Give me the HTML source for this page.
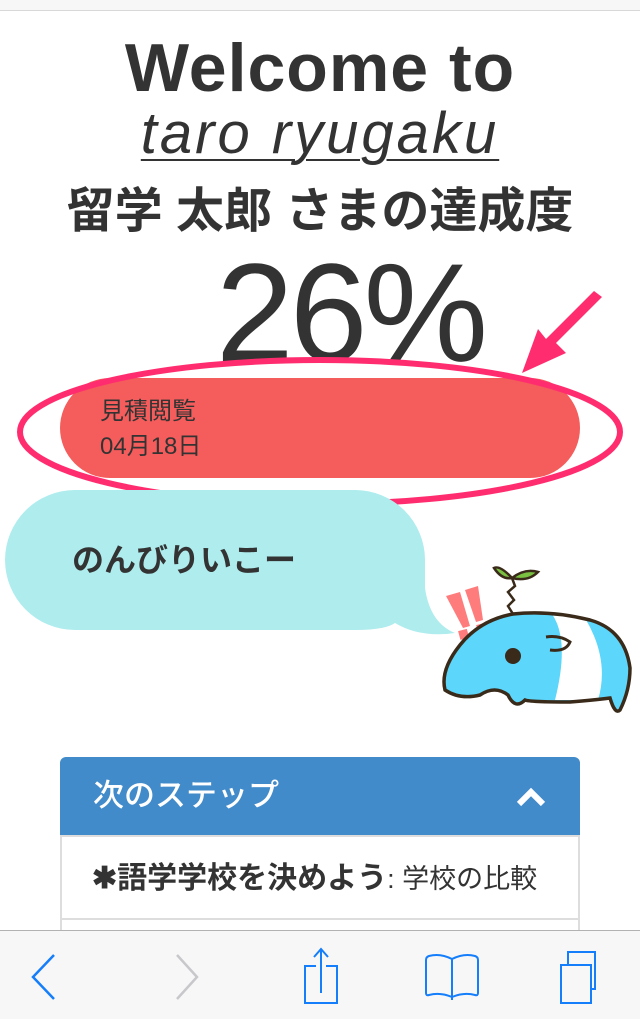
<!DOCTYPE html>
<html><head><meta charset="utf-8"><style>
*{margin:0;padding:0;box-sizing:border-box}
body{width:640px;height:1019px;overflow:hidden;background:#fff;position:relative;font-family:"Liberation Sans","Noto Sans CJK JP",sans-serif;color:#333}
.a{position:absolute}
</style></head><body>
<div class="a" style="left:0;top:0;width:640px;height:11px;background:#f7f7f7;border-bottom:1px solid #d8d8d8"></div>
<div class="a" style="left:0;top:28px;width:640px;text-align:center;font-size:68px;font-weight:bold;line-height:80px;letter-spacing:1px">Welcome to</div>
<div class="a" style="left:0;top:100px;width:640px;text-align:center;font-size:58px;font-style:italic;line-height:68px;letter-spacing:3px"><span style="text-decoration:underline;text-decoration-thickness:2px;text-underline-offset:6px">taro ryugaku</span></div>
<div class="a" style="left:0;top:182px;width:640px;text-align:center;font-size:48px;font-weight:bold;line-height:60px">留学 太郎 さまの達成度</div>
<div class="a" style="left:0;top:238px;width:700px;text-align:center;font-size:140px;font-weight:300;line-height:150px;letter-spacing:-4px;color:#333">26%</div>
<div class="a" style="left:60px;top:378px;width:520px;height:100px;border-radius:50px;background:#f45d5c"></div>
<div class="a" style="left:100px;top:394px;font-size:24px;line-height:35px;color:#333">見積閲覧<br>04月18日</div>
<svg class="a" style="left:0;top:280px" width="640" height="240">
<ellipse cx="320" cy="152" rx="300" ry="72" fill="none" stroke="#ff2d6f" stroke-width="6"/>
</svg>
<svg class="a" style="left:500px;top:285px" width="110" height="100">
<path d="M102 12 L56 58 L66 68 L22 88 L38 44 L46 54 L94 6 Z" fill="#ff2d6f"/>
</svg>
<svg class="a" style="left:0;top:488px" width="470" height="160">
<path d="M75 2 H355 A70 70 0 0 1 425 72 V100 Q430 135 455 145 Q420 150 395 135 Q385 142 355 142 H75 A70 70 0 0 1 75 2 Z" fill="#aeecee"/>
</svg>
<div class="a" style="left:72px;top:538px;font-size:32px;font-weight:bold;line-height:44px;color:#333">のんびりいこー</div>
<svg class="a" style="left:420px;top:550px" width="220" height="180" viewBox="0 0 220 180">
<g fill="#ff7c7c"><path d="M26 46 L40 42 L50 76 L43 78Z"/><path d="M45 40 L58 36 L63 70 L56 72Z"/><rect x="39" y="80" width="9" height="9" transform="rotate(-15 43 84)"/><rect x="57" y="74" width="9" height="9" transform="rotate(-15 61 78)"/></g>
<path d="M93 64 Q60 70 40 95 Q20 120 25 140 Q40 150 60 145 Q75 135 88 145 Q95 160 105 150 Q110 152 150 152 Q175 150 190 148 Q195 165 200 160 Q210 140 210 118 Q205 80 170 70 Q130 60 93 64Z" fill="#5cd6fa"/>
<path d="M132 64 Q150 90 135 150 L178 150 Q190 110 165 68Z" fill="#fff"/>
<path d="M93 64 Q60 70 40 95 Q20 120 25 140 Q40 150 60 145 Q75 135 88 145 Q95 160 105 150 Q110 152 150 152 Q175 150 190 148 Q195 165 200 160 Q210 140 210 118 Q205 80 170 70 Q130 60 93 64Z" fill="none" stroke="#3a2a1a" stroke-width="3.5"/>
<circle cx="93" cy="106" r="8" fill="#3a2a1a"/>
<path d="M126 87 Q140 85 150 92 Q146 102 130 100" fill="none" stroke="#3a2a1a" stroke-width="3"/>
<path d="M93 64 L88 56 L94 50 L88 42 L95 36 L92 28" fill="none" stroke="#3a2a1a" stroke-width="2.5"/>
<path d="M92 28 Q80 15 74 18 Q82 30 92 28Z M92 28 Q105 18 118 22 Q108 32 92 28Z" fill="#7ac142" stroke="#3a2a1a" stroke-width="2.5"/>
</svg>
<div class="a" style="left:60px;top:757px;width:520px;height:78px;background:#428bca;border-radius:6px 6px 0 0"></div>
<div class="a" style="left:93px;top:775px;font-size:31px;line-height:42px;color:#fff;font-weight:500">次のステップ</div>
<svg class="a" style="left:514px;top:784px" width="34" height="26"><path d="M5 20 L17 8 L29 20" fill="none" stroke="#fff" stroke-width="6"/></svg>
<div class="a" style="left:60px;top:835px;width:520px;height:120px;border:2px solid #ddd;border-radius:0 0 6px 6px"></div>
<div class="a" style="left:60px;top:918px;width:520px;height:2px;background:#ddd"></div>
<div class="a" style="left:92px;top:858px;font-size:30px;line-height:42px;font-weight:bold;color:#333">✱語学学校を決めよう<span style="font-weight:normal;font-size:27px">: 学校の比較</span></div>
<div class="a" style="left:0;top:930px;width:640px;height:89px;background:#f7f7f7;border-top:1px solid #b2b2b2"></div>
<svg class="a" style="left:0;top:930px" width="640" height="89">
<path d="M54 25 L33 47 L54 69" fill="none" stroke="#157efb" stroke-width="2.5"/>
<path d="M177 25 L197 47 L177 69" fill="none" stroke="#c7c7cc" stroke-width="2.5"/>
<path d="M316 36 H305 V73 H337 V36 H326 M321 63 V19 M314 27 L321 19 L328 27" fill="none" stroke="#157efb" stroke-width="2"/>
<path d="M452 29 Q440 23 429 26 Q426 27 426 30 V63 Q426 66 429 65 Q440 62 452 67 Q464 62 475 65 Q478 66 478 63 V30 Q478 27 475 26 Q464 23 452 29 Z M452 29 V70" fill="none" stroke="#157efb" stroke-width="2"/>
<rect x="561" y="35" width="30" height="38" fill="none" stroke="#157efb" stroke-width="2"/>
<path d="M568 35 V22 H595 V59 H591" fill="none" stroke="#157efb" stroke-width="2"/>
</svg>
</body></html>
